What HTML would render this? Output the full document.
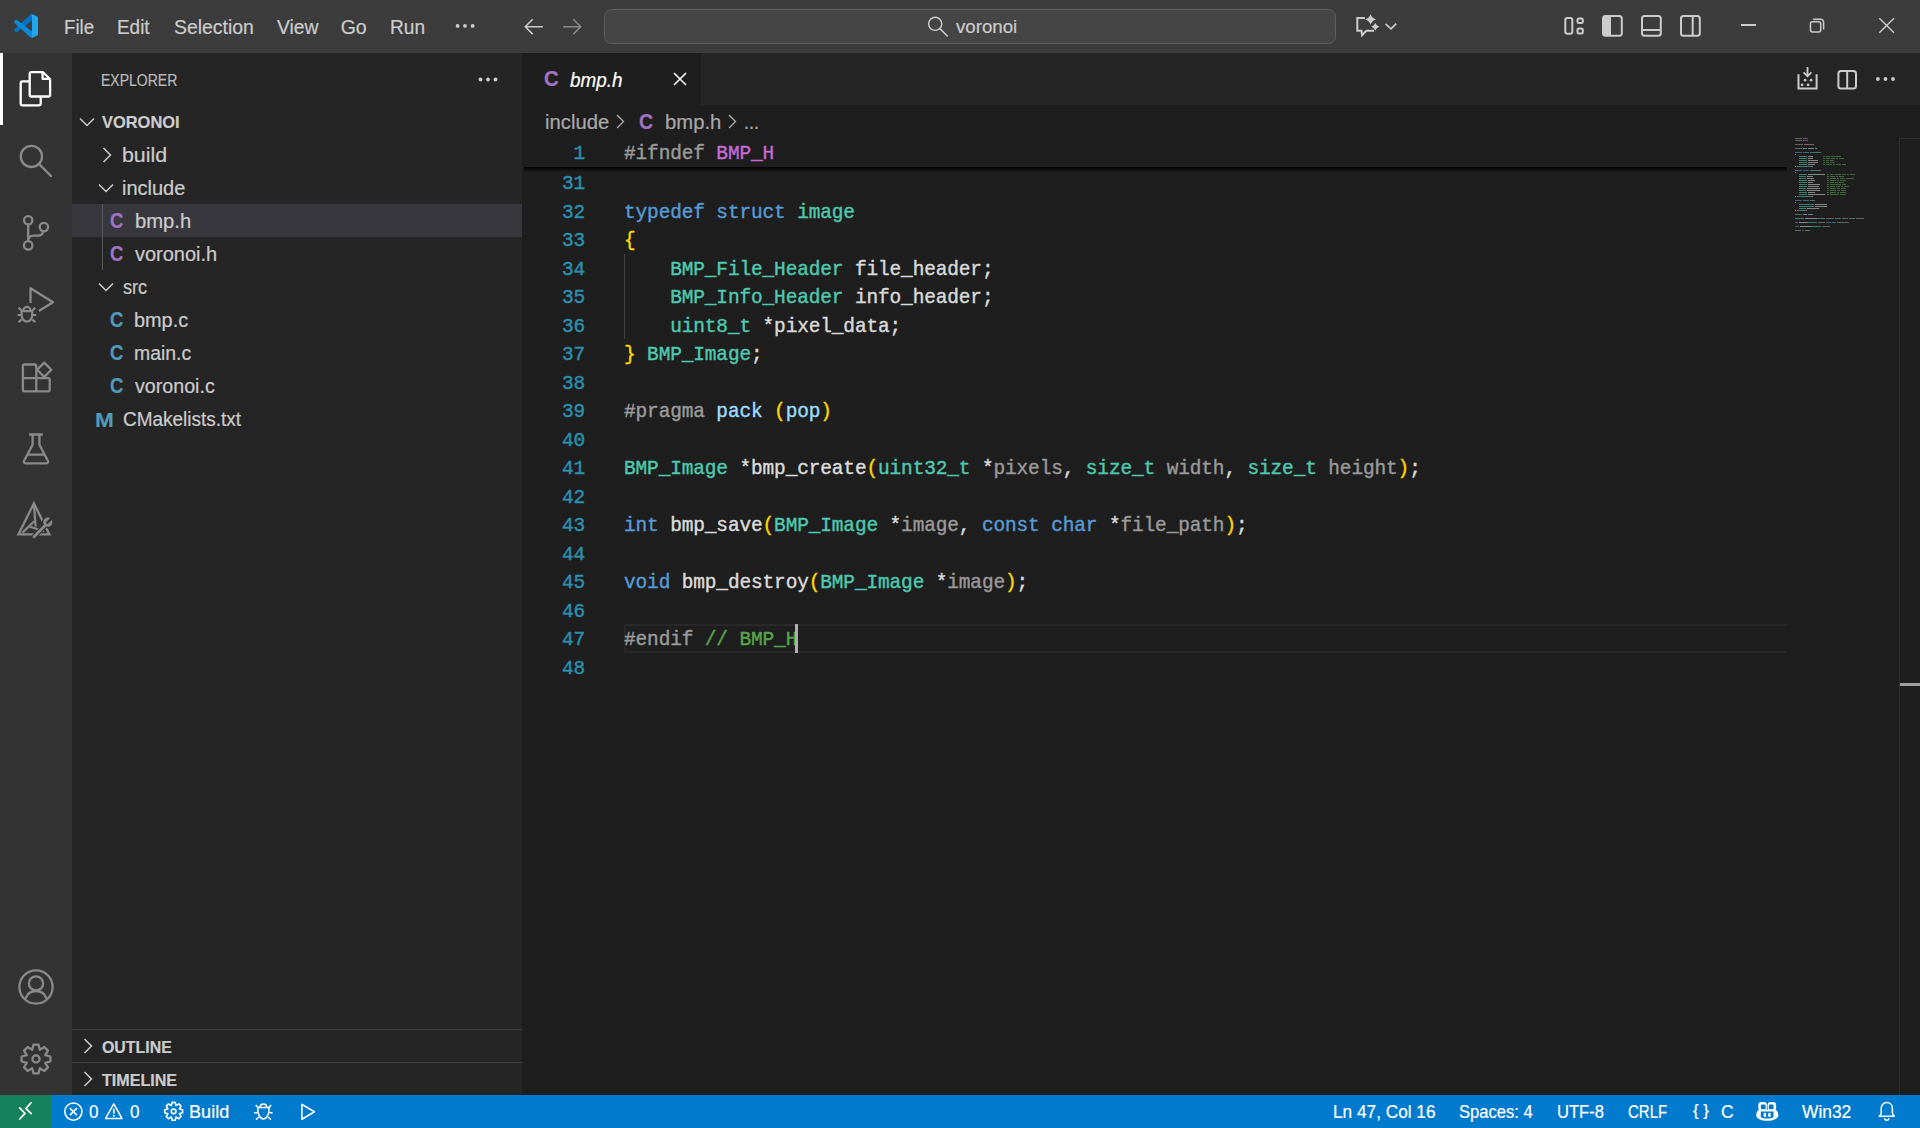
<!DOCTYPE html>
<html><head><meta charset="utf-8">
<style>
*{box-sizing:border-box;margin:0;padding:0}
html,body{width:1920px;height:1128px;overflow:hidden;background:#1e1e1e;font-family:"Liberation Sans",sans-serif;color:#cccccc}
.abs{position:absolute}
.t{position:absolute;white-space:pre}
.mono{font-family:"Liberation Mono",monospace;font-size:19.45px;letter-spacing:-0.12px;-webkit-text-stroke:0.4px currentColor}
.ln{position:absolute;left:522px;width:63px;text-align:right;color:#2b91af;height:28.5px;line-height:28.5px}
.cl{position:absolute;left:624px;height:28.5px;line-height:28.5px;color:#dadada;white-space:pre}
svg{position:absolute;overflow:visible}
</style></head><body>
<div class="abs" style="left:0px;top:0px;width:1920px;height:53px;background:#3c3c3c;"></div>
<div class="abs" style="left:0px;top:53px;width:72px;height:1042px;background:#333333;"></div>
<div class="abs" style="left:72px;top:53px;width:450px;height:1042px;background:#252526;"></div>
<div class="abs" style="left:522px;top:53px;width:1398px;height:52px;background:#252526;"></div>
<div class="abs" style="left:0px;top:1095px;width:1920px;height:33px;background:#007acc;"></div>
<svg style="left:14px;top:14px" width="24" height="24" viewBox="0 0 100 100">
<path d="M96.46 10.8 75.86.87C73.47-.28 70.62.2 68.75 2.08L1.32 63.6c-1.82 1.66-1.82 4.52 0 6.18l5.51 5.01c1.49 1.35 3.73 1.45 5.33.24L93.38 13.6c2.72-2.07 6.63-.13 6.63 3.29v-.24c0-2.4-1.38-4.59-3.54-5.63z" fill="#0072c6"/>
<path d="M96.46 89.2 75.86 99.13c-2.39 1.15-5.24.67-7.11-1.21L1.32 36.4c-1.82-1.66-1.82-4.52 0-6.18l5.51-5.01c1.49-1.35 3.73-1.45 5.33-.24l81.22 61.57c2.72 2.07 6.63.13 6.63-3.29v.24c0 2.4-1.38 4.59-3.54 5.63z" fill="#0a8ad8"/>
<path d="M75.86 99.13c-2.39 1.15-5.24.67-7.11-1.21 2.31 2.31 6.25.67 6.25-2.59V4.67c0-3.27-3.94-4.9-6.25-2.59 1.87-1.88 4.72-2.36 7.11-1.21l20.6 9.91c2.16 1.04 3.54 3.23 3.54 5.63v67.18c0 2.4-1.38 4.59-3.54 5.63z" fill="#24a6ee"/>
</svg>
<div class="t" style="left:64.04px;top:0px;height:54px;line-height:54px;font-size:19.5px;color:#cccccc;font-weight:400;font-style:normal;transform:scaleX(0.9567);transform-origin:0 0;-webkit-text-stroke:0.2px #cccccc;">File</div>
<div class="t" style="left:117.33px;top:0px;height:54px;line-height:54px;font-size:19.5px;color:#cccccc;font-weight:400;font-style:normal;transform:scaleX(0.9697);transform-origin:0 0;-webkit-text-stroke:0.2px #cccccc;">Edit</div>
<div class="t" style="left:173.71px;top:0px;height:54px;line-height:54px;font-size:19.5px;color:#cccccc;font-weight:400;font-style:normal;transform:scaleX(0.9949);transform-origin:0 0;-webkit-text-stroke:0.2px #cccccc;">Selection</div>
<div class="t" style="left:276.70px;top:0px;height:54px;line-height:54px;font-size:19.5px;color:#cccccc;font-weight:400;font-style:normal;transform:scaleX(0.9905);transform-origin:0 0;-webkit-text-stroke:0.2px #cccccc;">View</div>
<div class="t" style="left:340.70px;top:0px;height:54px;line-height:54px;font-size:19.5px;color:#cccccc;font-weight:400;font-style:normal;transform:scaleX(1.0000);transform-origin:0 0;-webkit-text-stroke:0.2px #cccccc;">Go</div>
<div class="t" style="left:390.02px;top:0px;height:54px;line-height:54px;font-size:19.5px;color:#cccccc;font-weight:400;font-style:normal;transform:scaleX(0.9794);transform-origin:0 0;-webkit-text-stroke:0.2px #cccccc;">Run</div>
<svg style="left:440px;top:0px" width="160" height="53" viewBox="440 0 160 53"><circle cx="457.6" cy="25.9" r="1.9" fill="#cccccc"/><circle cx="465" cy="25.9" r="1.9" fill="#cccccc"/><circle cx="472.6" cy="25.9" r="1.9" fill="#cccccc"/><path d="M542.9 26.7H525M532.7 19.3 525.3 26.7 532.7 34.1" stroke="#cccccc" stroke-width="1.5" fill="none"/><path d="M563.2 26.7H581M573.3 19.3 580.7 26.7 573.3 34.1" stroke="#8a8a8a" stroke-width="1.5" fill="none"/></svg>
<div class="abs" style="left:604px;top:9px;width:731.5px;height:35px;background:#454545;border:1px solid #5e5e5e;border-radius:7.5px"></div>
<svg style="left:916px;top:6px" width="40" height="40" viewBox="916 6 40 40"><circle cx="935.2" cy="23.8" r="6.6" stroke="#cccccc" stroke-width="1.4" fill="none"/><path d="M939.9 28.6 947.3 36" stroke="#cccccc" stroke-width="1.5" stroke-linecap="round"/></svg>
<div class="t" style="left:956.10px;top:10px;height:35px;line-height:35px;font-size:18px;color:#cccccc;font-weight:400;font-style:normal;transform:scaleX(1.0379);transform-origin:0 0;-webkit-text-stroke:0.2px #cccccc;">voronoi</div>
<svg style="left:1350px;top:6px" width="60" height="40" viewBox="0 0 60 40"><path d="M14.9 12.1H7.3V24.8H11.5L12.1 29.2 16.3 24.8H24.1" stroke="#cccccc" stroke-width="2" fill="none" stroke-linejoin="miter"/><path d="M20.6 8.0Q21.788 12.212 26.0 13.4Q21.788 14.588000000000001 20.6 18.8Q19.412000000000003 14.588000000000001 15.200000000000001 13.4Q19.412000000000003 12.212 20.6 8.0Z" fill="#cccccc"/><path d="M25.3 16.7Q26.18 19.82 29.3 20.7Q26.18 21.58 25.3 24.7Q24.42 21.58 21.3 20.7Q24.42 19.82 25.3 16.7Z" fill="#cccccc"/><path d="M35.6 17.9 41 22.9 46.3 17.7" stroke="#cccccc" stroke-width="1.7" fill="none"/></svg>
<svg style="left:1540px;top:0px" width="180" height="53" viewBox="1540 0 180 53"><rect x="1565.3" y="18" width="7" height="15.8" rx="2" stroke="#cccccc" stroke-width="2" fill="none"/><rect x="1577.5" y="18.4" width="5.3" height="4.6" rx="1.5" stroke="#cccccc" stroke-width="2" fill="none"/><rect x="1577.5" y="28.6" width="5.3" height="5" rx="1.5" stroke="#cccccc" stroke-width="2" fill="none"/><rect x="1603" y="16.1" width="18.8" height="19.6" rx="2.5" stroke="#cccccc" stroke-width="2" fill="none"/><path d="M1603 18.6a2.5 2.5 0 0 1 2.5-2.5H1611V35.7H1605.5a2.5 2.5 0 0 1-2.5-2.5z" fill="#cccccc"/><rect x="1642" y="16.1" width="18.8" height="19.6" rx="2.5" stroke="#cccccc" stroke-width="2" fill="none"/><path d="M1642 30H1660.8" stroke="#cccccc" stroke-width="2"/><rect x="1681" y="16.1" width="18.8" height="19.6" rx="2.5" stroke="#cccccc" stroke-width="2" fill="none"/><path d="M1692.7 16.1V35.7" stroke="#cccccc" stroke-width="2"/></svg>
<div class="abs" style="left:1741px;top:24px;width:15px;height:2px;background:#cccccc;"></div>
<svg style="left:1800px;top:10px" width="40" height="30" viewBox="1800 10 40 30"><rect x="1810.5" y="21.8" width="10.2" height="10.2" rx="2" stroke="#cccccc" stroke-width="1.5" fill="none"/><path d="M1813.2 19.2H1820.6a3 3 0 0 1 3 3V29.4" stroke="#cccccc" stroke-width="1.5" fill="none"/></svg>
<svg style="left:1870px;top:10px" width="30" height="30" viewBox="1870 10 30 30"><path d="M1879.3 18.2 1894 32.8M1894 18.2 1879.3 32.8" stroke="#cccccc" stroke-width="1.4"/></svg>
<div class="abs" style="left:0px;top:53px;width:3px;height:72px;background:#ffffff;"></div>
<svg style="left:12px;top:65px" width="48" height="48" viewBox="0 0 48 48"><path d="M17.7 16.4H10.5a1.8 1.8 0 0 0-1.8 1.8v20.4a1.8 1.8 0 0 0 1.8 1.8H26.9a1.8 1.8 0 0 0 1.8-1.8V31.5" stroke="#ffffff" stroke-width="2.3" fill="none" stroke-linejoin="round"/><path d="M19.5 7.2H31l7.1 7.1V29.7a1.8 1.8 0 0 1-1.8 1.8H19.5a1.8 1.8 0 0 1-1.8-1.8V9a1.8 1.8 0 0 1 1.8-1.8z" stroke="#ffffff" stroke-width="2.3" fill="none" stroke-linejoin="round"/><path d="M30.6 7.5V13.8H37.8" stroke="#ffffff" stroke-width="2.3" fill="none" stroke-linejoin="round"/></svg>
<svg style="left:12px;top:137px" width="48" height="48" viewBox="0 0 48 48"><circle cx="19.4" cy="19.4" r="10.6" stroke="#8a8a8a" stroke-width="2.3" fill="none" stroke-linejoin="round"/><path d="M27.2 27.2 39 39" stroke="#8a8a8a" stroke-width="2.4" stroke-linecap="round"/></svg>
<svg style="left:12px;top:206px" width="48" height="48" viewBox="0 0 48 48"><circle cx="16.2" cy="14.3" r="4.2" stroke="#8a8a8a" stroke-width="2.3" fill="none" stroke-linejoin="round"/><circle cx="31.9" cy="21.1" r="4.2" stroke="#8a8a8a" stroke-width="2.3" fill="none" stroke-linejoin="round"/><circle cx="16.2" cy="39.4" r="4.2" stroke="#8a8a8a" stroke-width="2.3" fill="none" stroke-linejoin="round"/><path d="M16.2 18.5V35.2M31.2 25.2c-.6 3-2.2 4.5-5 4.5H21.5c-3 0-5.3 1.6-5.3 5" stroke="#8a8a8a" stroke-width="2.3" fill="none" stroke-linejoin="round"/></svg>
<svg style="left:12px;top:278px" width="48" height="48" viewBox="0 0 48 48"><path d="M18.5 25V10.2L41 24.2 26.9 33" stroke="#8a8a8a" stroke-width="2.3" fill="none" stroke-linejoin="round"/><path d="M11.3 32.5a3.6 3.6 0 0 1 7.2 0" stroke="#8a8a8a" stroke-width="2.2" fill="none"/><path d="M9.6 33.2h10.6v4c0 3.6-2.3 6.5-5.3 6.5s-5.3-2.9-5.3-6.5z" stroke="#8a8a8a" stroke-width="2.2" fill="none"/><path d="M5.5 37h4M20.2 37h4M6.5 29.7l3 2.6M23.3 29.7l-3 2.6M6.5 44.2l3-2.6M23.3 44.2l-3-2.6" stroke="#8a8a8a" stroke-width="2.2"/></svg>
<svg style="left:12px;top:350px" width="48" height="48" viewBox="0 0 48 48"><path d="M24.3 41.3H12.4a1.5 1.5 0 0 1-1.5-1.5V16a1.5 1.5 0 0 1 1.5-1.5H22.8a1.5 1.5 0 0 1 1.5 1.5V41.3H36.2a1.5 1.5 0 0 0 1.5-1.5V29.6a1.5 1.5 0 0 0-1.5-1.5H10.9" stroke="#8a8a8a" stroke-width="2.3" fill="none" stroke-linejoin="round"/><path d="M32.2 12.6 39.3 19.8 32.2 26.9 25.1 19.8z" stroke="#8a8a8a" stroke-width="2.3" fill="none" stroke-linejoin="round"/></svg>
<svg style="left:12px;top:422px" width="48" height="48" viewBox="0 0 48 48"><path d="M17 12.5H30.9M20.6 12.5V22.8L12 39a1.5 1.5 0 0 0 1.3 2.3H34.6a1.5 1.5 0 0 0 1.3-2.3L27.4 22.8V12.5M16.2 32.6H31.8" stroke="#8a8a8a" stroke-width="2.3" fill="none" stroke-linejoin="round"/></svg>
<svg style="left:12px;top:494px" width="48" height="48" viewBox="0 0 48 48"><path d="M21.9 9.4 6.4 40.4H37.4z" stroke="#8a8a8a" stroke-width="2.3" fill="none" stroke-linejoin="miter"/><path d="M21.9 9.4 23.6 32.5M10.5 38.6 22.2 27.2M16.6 32.2 32 37.3" stroke="#8a8a8a" stroke-width="2.2" fill="none"/><path d="M34.3 30.2 22 42.8" stroke="#333333" stroke-width="5.2" stroke-linecap="round"/><circle cx="35.8" cy="28.2" r="6" fill="#333333"/><path d="M34.3 30.2 22 42.8" stroke="#8a8a8a" stroke-width="2.8" stroke-linecap="round"/><circle cx="35.8" cy="28.2" r="4.6" fill="#8a8a8a"/><path d="M35.4 28.6 40.8 23.2" stroke="#333333" stroke-width="2.6" stroke-linecap="round"/></svg>
<svg style="left:12px;top:963px" width="48" height="48" viewBox="0 0 48 48"><circle cx="24" cy="24" r="16.6" stroke="#8a8a8a" stroke-width="2.3" fill="none" stroke-linejoin="round"/><circle cx="24" cy="20.4" r="7.1" stroke="#8a8a8a" stroke-width="2.3" fill="none" stroke-linejoin="round"/><path d="M13.4 35.6c1.8-4.8 5.6-7.6 10.6-7.6s8.8 2.8 10.6 7.6" stroke="#8a8a8a" stroke-width="2.3" fill="none" stroke-linejoin="round"/></svg>
<svg style="left:12px;top:1035px" width="48" height="48" viewBox="0 0 48 48"><path d="M21.51 9.61 L26.49 9.61 L27.83 14.76 L32.41 12.07 L35.93 15.59 L33.24 20.17 L38.39 21.51 L38.39 26.49 L33.24 27.83 L35.93 32.41 L32.41 35.93 L27.83 33.24 L26.49 38.39 L21.51 38.39 L20.17 33.24 L15.59 35.93 L12.07 32.41 L14.76 27.83 L9.61 26.49 L9.61 21.51 L14.76 20.17 L12.07 15.59 L15.59 12.07 L20.17 14.76Z" stroke="#8a8a8a" stroke-width="2.3" fill="none" stroke-linejoin="round"/><circle cx="24" cy="24" r="3.6" stroke="#8a8a8a" stroke-width="2.3" fill="none"/></svg>
<div class="t" style="left:101.45px;top:64px;height:33px;line-height:33px;font-size:16.5px;color:#bbbbbb;font-weight:400;font-style:normal;transform:scaleX(0.8489);transform-origin:0 0;-webkit-text-stroke:0.2px #bbbbbb;">EXPLORER</div>
<svg style="left:477.5px;top:76.5px" width="20" height="5"><circle cx="2.5" cy="2.5" r="1.9" fill="#cccccc"/><circle cx="10" cy="2.5" r="1.9" fill="#cccccc"/><circle cx="17.5" cy="2.5" r="1.9" fill="#cccccc"/></svg>
<svg style="left:79px;top:117px" width="16" height="10" viewBox="0 0 16 10"><path d="M1 1.5l7 7 7-7" stroke="#cccccc" stroke-width="1.5" fill="none"/></svg>
<div class="t" style="left:102.30px;top:106px;height:33px;line-height:33px;font-size:16.5px;color:#cccccc;font-weight:700;font-style:normal;transform:scaleX(0.9961);transform-origin:0 0;-webkit-text-stroke:0.2px #cccccc;">VORONOI</div>
<div class="abs" style="left:72px;top:204px;width:450px;height:33px;background:#37373d;"></div>
<div class="abs" style="left:102px;top:204px;width:1px;height:66px;background:#585858;"></div>
<svg style="left:102px;top:147px" width="10" height="16" viewBox="0 0 10 16"><path d="M1.5 1l7 7-7 7" stroke="#cccccc" stroke-width="1.5" fill="none"/></svg>
<div class="t" style="left:122.31px;top:139px;height:33px;line-height:33px;font-size:19.5px;color:#cccccc;font-weight:400;font-style:normal;transform:scaleX(1.0949);transform-origin:0 0;-webkit-text-stroke:0.2px #cccccc;">build</div>
<svg style="left:98px;top:183px" width="16" height="10" viewBox="0 0 16 10"><path d="M1 1.5l7 7 7-7" stroke="#cccccc" stroke-width="1.5" fill="none"/></svg>
<div class="t" style="left:122.38px;top:172px;height:33px;line-height:33px;font-size:19.5px;color:#cccccc;font-weight:400;font-style:normal;transform:scaleX(1.0250);transform-origin:0 0;-webkit-text-stroke:0.2px #cccccc;">include</div>
<div class="t" style="left:109.64px;top:205px;height:33px;line-height:33px;font-size:21.5px;color:#a074c4;font-weight:700;font-style:normal;transform:scaleX(0.8571);transform-origin:0 0;-webkit-text-stroke:0.2px #a074c4;">C</div>
<div class="t" style="left:134.76px;top:205px;height:33px;line-height:33px;font-size:19.5px;color:#cccccc;font-weight:400;font-style:normal;transform:scaleX(1.0365);transform-origin:0 0;-webkit-text-stroke:0.2px #cccccc;">bmp.h</div>
<div class="t" style="left:109.64px;top:238px;height:33px;line-height:33px;font-size:21.5px;color:#a074c4;font-weight:700;font-style:normal;transform:scaleX(0.8571);transform-origin:0 0;-webkit-text-stroke:0.2px #a074c4;">C</div>
<div class="t" style="left:135.30px;top:238px;height:33px;line-height:33px;font-size:19.5px;color:#cccccc;font-weight:400;font-style:normal;transform:scaleX(1.0241);transform-origin:0 0;-webkit-text-stroke:0.2px #cccccc;">voronoi.h</div>
<svg style="left:98px;top:282px" width="16" height="10" viewBox="0 0 16 10"><path d="M1 1.5l7 7 7-7" stroke="#cccccc" stroke-width="1.5" fill="none"/></svg>
<div class="t" style="left:123.20px;top:271px;height:33px;line-height:33px;font-size:19.5px;color:#cccccc;font-weight:400;font-style:normal;transform:scaleX(0.9308);transform-origin:0 0;-webkit-text-stroke:0.2px #cccccc;">src</div>
<div class="t" style="left:109.64px;top:304px;height:33px;line-height:33px;font-size:21.5px;color:#519aba;font-weight:700;font-style:normal;transform:scaleX(0.8571);transform-origin:0 0;-webkit-text-stroke:0.2px #519aba;">C</div>
<div class="t" style="left:134.28px;top:304px;height:33px;line-height:33px;font-size:19.5px;color:#cccccc;font-weight:400;font-style:normal;transform:scaleX(1.0192);transform-origin:0 0;-webkit-text-stroke:0.2px #cccccc;">bmp.c</div>
<div class="t" style="left:109.64px;top:337px;height:33px;line-height:33px;font-size:21.5px;color:#519aba;font-weight:700;font-style:normal;transform:scaleX(0.8571);transform-origin:0 0;-webkit-text-stroke:0.2px #519aba;">C</div>
<div class="t" style="left:134.30px;top:337px;height:33px;line-height:33px;font-size:19.5px;color:#cccccc;font-weight:400;font-style:normal;transform:scaleX(0.9964);transform-origin:0 0;-webkit-text-stroke:0.2px #cccccc;">main.c</div>
<div class="t" style="left:109.64px;top:370px;height:33px;line-height:33px;font-size:21.5px;color:#519aba;font-weight:700;font-style:normal;transform:scaleX(0.8571);transform-origin:0 0;-webkit-text-stroke:0.2px #519aba;">C</div>
<div class="t" style="left:135.30px;top:370px;height:33px;line-height:33px;font-size:19.5px;color:#cccccc;font-weight:400;font-style:normal;transform:scaleX(1.0076);transform-origin:0 0;-webkit-text-stroke:0.2px #cccccc;">voronoi.c</div>
<div class="t" style="left:95.22px;top:403px;height:33px;line-height:33px;font-size:21px;color:#519aba;font-weight:700;font-style:normal;transform:scaleX(1.0750);transform-origin:0 0;-webkit-text-stroke:0.2px #519aba;">M</div>
<div class="t" style="left:122.73px;top:403px;height:33px;line-height:33px;font-size:19.5px;color:#cccccc;font-weight:400;font-style:normal;transform:scaleX(0.9727);transform-origin:0 0;-webkit-text-stroke:0.2px #cccccc;">CMakelists.txt</div>
<div class="abs" style="left:72px;top:1029px;width:450px;height:1px;background:#3f3f40;"></div>
<div class="abs" style="left:72px;top:1062px;width:450px;height:1px;background:#3f3f40;"></div>
<svg style="left:83px;top:1038px" width="10" height="16" viewBox="0 0 10 16"><path d="M1.5 1l7 7-7 7" stroke="#cccccc" stroke-width="1.5" fill="none"/></svg>
<svg style="left:83px;top:1071px" width="10" height="16" viewBox="0 0 10 16"><path d="M1.5 1l7 7-7 7" stroke="#cccccc" stroke-width="1.5" fill="none"/></svg>
<div class="t" style="left:102.10px;top:1031px;height:33px;line-height:33px;font-size:16.5px;color:#cccccc;font-weight:700;font-style:normal;transform:scaleX(0.9639);transform-origin:0 0;-webkit-text-stroke:0.2px #cccccc;">OUTLINE</div>
<div class="t" style="left:102.10px;top:1064px;height:33px;line-height:33px;font-size:16.5px;color:#cccccc;font-weight:700;font-style:normal;transform:scaleX(0.9753);transform-origin:0 0;-webkit-text-stroke:0.2px #cccccc;">TIMELINE</div>
<div class="abs" style="left:522px;top:53px;width:179px;height:52px;background:#1e1e1e;"></div>
<div class="t" style="left:544.05px;top:53px;height:52px;line-height:52px;font-size:21.5px;color:#a074c4;font-weight:700;font-style:normal;transform:scaleX(0.9500);transform-origin:0 0;-webkit-text-stroke:0.2px #a074c4;">C</div>
<div class="t" style="left:570.00px;top:54px;height:52px;line-height:52px;font-size:19.5px;color:#ffffff;font-weight:400;font-style:italic;transform:scaleX(0.9685);transform-origin:0 0;-webkit-text-stroke:0.2px #ffffff;">bmp.h</div>
<svg style="left:673px;top:72px" width="14" height="14" viewBox="0 0 14 14"><path d="M1 1l12 12M13 1 1 13" stroke="#ffffff" stroke-width="1.6"/></svg>
<svg style="left:1790px;top:60px" width="116" height="40" viewBox="1790 60 116 40"><path d="M1798.5 74.2V88.4H1816.6V74.2" stroke="#cccccc" stroke-width="2" fill="none"/><path d="M1807.5 67V76M1803.6 72.4 1807.5 76.3 1811.4 72.4" stroke="#cccccc" stroke-width="1.8" fill="none"/><circle cx="1805.1" cy="80.2" r="1.35" fill="#cccccc"/><circle cx="1811.1" cy="80.2" r="1.35" fill="#cccccc"/><circle cx="1802.1" cy="84.8" r="1.35" fill="#cccccc"/><circle cx="1808.1" cy="84.8" r="1.35" fill="#cccccc"/><rect x="1838.4" y="71" width="17.6" height="17.6" rx="2.5" stroke="#cccccc" stroke-width="2" fill="none"/><path d="M1847.2 71V88.6" stroke="#cccccc" stroke-width="2"/><circle cx="1877.9" cy="79" r="1.9" fill="#cccccc"/><circle cx="1885.5" cy="79" r="1.9" fill="#cccccc"/><circle cx="1893" cy="79" r="1.9" fill="#cccccc"/></svg>
<div class="t" style="left:544.96px;top:106px;height:33px;line-height:33px;font-size:19.5px;color:#a9a9a9;font-weight:400;font-style:normal;transform:scaleX(1.0383);transform-origin:0 0;-webkit-text-stroke:0.2px #a9a9a9;">include</div>
<svg style="left:616px;top:114px" width="9" height="15" viewBox="0 0 9 15"><path d="M1 1l6.5 6.5L1 14" stroke="#a9a9a9" stroke-width="1.4" fill="none"/></svg>
<div class="t" style="left:639.39px;top:106px;height:33px;line-height:33px;font-size:21.5px;color:#a074c4;font-weight:700;font-style:normal;transform:scaleX(0.9071);transform-origin:0 0;-webkit-text-stroke:0.2px #a074c4;">C</div>
<div class="t" style="left:664.96px;top:106px;height:33px;line-height:33px;font-size:19.5px;color:#a9a9a9;font-weight:400;font-style:normal;transform:scaleX(1.0385);transform-origin:0 0;-webkit-text-stroke:0.2px #a9a9a9;">bmp.h</div>
<svg style="left:728px;top:114px" width="9" height="15" viewBox="0 0 9 15"><path d="M1 1l6.5 6.5L1 14" stroke="#a9a9a9" stroke-width="1.4" fill="none"/></svg>
<div class="t" style="left:744.07px;top:106px;height:33px;line-height:33px;font-size:19.5px;color:#a9a9a9;font-weight:400;font-style:normal;transform:scaleX(0.9286);transform-origin:0 0;-webkit-text-stroke:0.2px #a9a9a9;">...</div>
<div class="abs" style="left:624px;top:624.0px;width:1163px;height:28.5px;background:transparent;border:2px solid #282828;border-right:none"></div>
<div class="ln mono" style="top:170.0px">31</div>
<div class="ln mono" style="top:198.5px">32</div>
<div class="cl mono" style="top:198.5px"><span style="color:#569cd6">typedef</span> <span style="color:#569cd6">struct</span> <span style="color:#4ec9b0">image</span></div>
<div class="ln mono" style="top:227.0px">33</div>
<div class="cl mono" style="top:227.0px"><span style="color:#ffd700">{</span></div>
<div class="ln mono" style="top:255.5px">34</div>
<div class="cl mono" style="top:255.5px">    <span style="color:#4ec9b0">BMP_File_Header</span> file_header;</div>
<div class="ln mono" style="top:284.0px">35</div>
<div class="cl mono" style="top:284.0px">    <span style="color:#4ec9b0">BMP_Info_Header</span> info_header;</div>
<div class="ln mono" style="top:312.5px">36</div>
<div class="cl mono" style="top:312.5px">    <span style="color:#4ec9b0">uint8_t</span> *pixel_data;</div>
<div class="ln mono" style="top:341.0px">37</div>
<div class="cl mono" style="top:341.0px"><span style="color:#ffd700">}</span> <span style="color:#4ec9b0">BMP_Image</span>;</div>
<div class="ln mono" style="top:369.5px">38</div>
<div class="ln mono" style="top:398.0px">39</div>
<div class="cl mono" style="top:398.0px"><span style="color:#9b9b9b">#pragma</span> <span style="color:#9cdcfe">pack</span> <span style="color:#ffd700">(</span><span style="color:#9cdcfe">pop</span><span style="color:#ffd700">)</span></div>
<div class="ln mono" style="top:426.5px">40</div>
<div class="ln mono" style="top:455.0px">41</div>
<div class="cl mono" style="top:455.0px"><span style="color:#4ec9b0">BMP_Image</span> *<span style="color:#dcdcdc">bmp_create</span><span style="color:#ffd700">(</span><span style="color:#4ec9b0">uint32_t</span> *<span style="color:#9a9a9a">pixels</span>, <span style="color:#4ec9b0">size_t</span> <span style="color:#9a9a9a">width</span>, <span style="color:#4ec9b0">size_t</span> <span style="color:#9a9a9a">height</span><span style="color:#ffd700">)</span>;</div>
<div class="ln mono" style="top:483.5px">42</div>
<div class="ln mono" style="top:512.0px">43</div>
<div class="cl mono" style="top:512.0px"><span style="color:#569cd6">int</span> <span style="color:#dcdcdc">bmp_save</span><span style="color:#ffd700">(</span><span style="color:#4ec9b0">BMP_Image</span> *<span style="color:#9a9a9a">image</span>, <span style="color:#569cd6">const</span> <span style="color:#569cd6">char</span> *<span style="color:#9a9a9a">file_path</span><span style="color:#ffd700">)</span>;</div>
<div class="ln mono" style="top:540.5px">44</div>
<div class="ln mono" style="top:569.0px">45</div>
<div class="cl mono" style="top:569.0px"><span style="color:#569cd6">void</span> <span style="color:#dcdcdc">bmp_destroy</span><span style="color:#ffd700">(</span><span style="color:#4ec9b0">BMP_Image</span> *<span style="color:#9a9a9a">image</span><span style="color:#ffd700">)</span>;</div>
<div class="ln mono" style="top:597.5px">46</div>
<div class="ln mono" style="top:626.0px">47</div>
<div class="cl mono" style="top:626.0px"><span style="color:#9b9b9b">#endif</span> <span style="color:#57a64a">// BMP_H</span></div>
<div class="ln mono" style="top:654.5px">48</div>
<div class="abs" style="left:624px;top:253.5px;width:1px;height:85.5px;background:#404040;"></div>
<div class="abs" style="left:795px;top:624.0px;width:3px;height:28.5px;background:#aeafad;"></div>
<div class="abs" style="left:522px;top:138px;width:1265px;height:28.5px;background:#1e1e1e;"></div>
<div class="abs" style="left:524px;top:166.5px;width:1263px;height:5px;background:linear-gradient(#000000 0%, rgba(0,0,0,0) 100%);"></div>
<div class="ln mono" style="top:140px">1</div>
<div class="cl mono" style="top:140px"><span style="color:#9b9b9b">#ifndef</span> <span style="color:#c66bd2">BMP_H</span></div>
<div style="position:absolute;left:0;top:0;width:0;height:0"><div style="position:absolute;left:1795.0px;top:138px;width:7px;height:2px;background:linear-gradient(#9b9b9b 72%,transparent 72%);opacity:.55"></div><div style="position:absolute;left:1803.0px;top:138px;width:5px;height:2px;background:linear-gradient(#c868d2 72%,transparent 72%);opacity:.55"></div><div style="position:absolute;left:1795.0px;top:140px;width:7px;height:2px;background:linear-gradient(#9b9b9b 72%,transparent 72%);opacity:.55"></div><div style="position:absolute;left:1803.0px;top:140px;width:5px;height:2px;background:linear-gradient(#c868d2 72%,transparent 72%);opacity:.55"></div><div style="position:absolute;left:1795.0px;top:144px;width:8px;height:2px;background:linear-gradient(#9b9b9b 72%,transparent 72%);opacity:.55"></div><div style="position:absolute;left:1804.0px;top:144px;width:10px;height:2px;background:linear-gradient(#d69d85 72%,transparent 72%);opacity:.55"></div><div style="position:absolute;left:1795.0px;top:148px;width:7px;height:2px;background:linear-gradient(#9b9b9b 72%,transparent 72%);opacity:.55"></div><div style="position:absolute;left:1803.0px;top:148px;width:4px;height:2px;background:linear-gradient(#9cdcfe 72%,transparent 72%);opacity:.55"></div><div style="position:absolute;left:1808.0px;top:148px;width:6px;height:2px;background:linear-gradient(#9cdcfe 72%,transparent 72%);opacity:.55"></div><div style="position:absolute;left:1815.0px;top:148px;width:2px;height:2px;background:linear-gradient(#b5cea8 72%,transparent 72%);opacity:.55"></div><div style="position:absolute;left:1795.0px;top:152px;width:7px;height:2px;background:linear-gradient(#569cd6 72%,transparent 72%);opacity:.55"></div><div style="position:absolute;left:1803.0px;top:152px;width:6px;height:2px;background:linear-gradient(#569cd6 72%,transparent 72%);opacity:.55"></div><div style="position:absolute;left:1810.0px;top:152px;width:11px;height:2px;background:linear-gradient(#4ec9b0 72%,transparent 72%);opacity:.55"></div><div style="position:absolute;left:1795.0px;top:154px;width:1px;height:2px;background:linear-gradient(#cccccc 72%,transparent 72%);opacity:.55"></div><div style="position:absolute;left:1799.0px;top:156px;width:8px;height:2px;background:linear-gradient(#4ec9b0 72%,transparent 72%);opacity:.55"></div><div style="position:absolute;left:1808.0px;top:156px;width:5px;height:2px;background:linear-gradient(#dcdcdc 72%,transparent 72%);opacity:.55"></div><div style="position:absolute;left:1823.0px;top:156px;width:2px;height:2px;background:linear-gradient(#57a64a 72%,transparent 72%);opacity:.55"></div><div style="position:absolute;left:1826.0px;top:156px;width:4px;height:2px;background:linear-gradient(#57a64a 72%,transparent 72%);opacity:.55"></div><div style="position:absolute;left:1831.0px;top:156px;width:10px;height:2px;background:linear-gradient(#57a64a 72%,transparent 72%);opacity:.55"></div><div style="position:absolute;left:1799.0px;top:158px;width:8px;height:2px;background:linear-gradient(#4ec9b0 72%,transparent 72%);opacity:.55"></div><div style="position:absolute;left:1808.0px;top:158px;width:5px;height:2px;background:linear-gradient(#dcdcdc 72%,transparent 72%);opacity:.55"></div><div style="position:absolute;left:1823.0px;top:158px;width:2px;height:2px;background:linear-gradient(#57a64a 72%,transparent 72%);opacity:.55"></div><div style="position:absolute;left:1826.0px;top:158px;width:4px;height:2px;background:linear-gradient(#57a64a 72%,transparent 72%);opacity:.55"></div><div style="position:absolute;left:1831.0px;top:158px;width:4px;height:2px;background:linear-gradient(#57a64a 72%,transparent 72%);opacity:.55"></div><div style="position:absolute;left:1836.0px;top:158px;width:2px;height:2px;background:linear-gradient(#57a64a 72%,transparent 72%);opacity:.55"></div><div style="position:absolute;left:1839.0px;top:158px;width:5px;height:2px;background:linear-gradient(#57a64a 72%,transparent 72%);opacity:.55"></div><div style="position:absolute;left:1799.0px;top:160px;width:8px;height:2px;background:linear-gradient(#4ec9b0 72%,transparent 72%);opacity:.55"></div><div style="position:absolute;left:1808.0px;top:160px;width:10px;height:2px;background:linear-gradient(#dcdcdc 72%,transparent 72%);opacity:.55"></div><div style="position:absolute;left:1823.0px;top:160px;width:2px;height:2px;background:linear-gradient(#57a64a 72%,transparent 72%);opacity:.55"></div><div style="position:absolute;left:1826.0px;top:160px;width:3px;height:2px;background:linear-gradient(#57a64a 72%,transparent 72%);opacity:.55"></div><div style="position:absolute;left:1830.0px;top:160px;width:4px;height:2px;background:linear-gradient(#57a64a 72%,transparent 72%);opacity:.55"></div><div style="position:absolute;left:1799.0px;top:162px;width:8px;height:2px;background:linear-gradient(#4ec9b0 72%,transparent 72%);opacity:.55"></div><div style="position:absolute;left:1808.0px;top:162px;width:10px;height:2px;background:linear-gradient(#dcdcdc 72%,transparent 72%);opacity:.55"></div><div style="position:absolute;left:1823.0px;top:162px;width:2px;height:2px;background:linear-gradient(#57a64a 72%,transparent 72%);opacity:.55"></div><div style="position:absolute;left:1826.0px;top:162px;width:3px;height:2px;background:linear-gradient(#57a64a 72%,transparent 72%);opacity:.55"></div><div style="position:absolute;left:1830.0px;top:162px;width:4px;height:2px;background:linear-gradient(#57a64a 72%,transparent 72%);opacity:.55"></div><div style="position:absolute;left:1799.0px;top:164px;width:8px;height:2px;background:linear-gradient(#4ec9b0 72%,transparent 72%);opacity:.55"></div><div style="position:absolute;left:1808.0px;top:164px;width:7px;height:2px;background:linear-gradient(#dcdcdc 72%,transparent 72%);opacity:.55"></div><div style="position:absolute;left:1823.0px;top:164px;width:2px;height:2px;background:linear-gradient(#57a64a 72%,transparent 72%);opacity:.55"></div><div style="position:absolute;left:1826.0px;top:164px;width:6px;height:2px;background:linear-gradient(#57a64a 72%,transparent 72%);opacity:.55"></div><div style="position:absolute;left:1833.0px;top:164px;width:2px;height:2px;background:linear-gradient(#57a64a 72%,transparent 72%);opacity:.55"></div><div style="position:absolute;left:1836.0px;top:164px;width:5px;height:2px;background:linear-gradient(#57a64a 72%,transparent 72%);opacity:.55"></div><div style="position:absolute;left:1842.0px;top:164px;width:4px;height:2px;background:linear-gradient(#57a64a 72%,transparent 72%);opacity:.55"></div><div style="position:absolute;left:1795.0px;top:166px;width:1px;height:2px;background:linear-gradient(#cccccc 72%,transparent 72%);opacity:.55"></div><div style="position:absolute;left:1797.0px;top:166px;width:15px;height:2px;background:linear-gradient(#4ec9b0 72%,transparent 72%);opacity:.55"></div><div style="position:absolute;left:1812.0px;top:166px;width:1px;height:2px;background:linear-gradient(#dcdcdc 72%,transparent 72%);opacity:.55"></div><div style="position:absolute;left:1795.0px;top:170px;width:7px;height:2px;background:linear-gradient(#569cd6 72%,transparent 72%);opacity:.55"></div><div style="position:absolute;left:1803.0px;top:170px;width:6px;height:2px;background:linear-gradient(#569cd6 72%,transparent 72%);opacity:.55"></div><div style="position:absolute;left:1810.0px;top:170px;width:11px;height:2px;background:linear-gradient(#4ec9b0 72%,transparent 72%);opacity:.55"></div><div style="position:absolute;left:1795.0px;top:172px;width:1px;height:2px;background:linear-gradient(#cccccc 72%,transparent 72%);opacity:.55"></div><div style="position:absolute;left:1799.0px;top:174px;width:8px;height:2px;background:linear-gradient(#4ec9b0 72%,transparent 72%);opacity:.55"></div><div style="position:absolute;left:1808.0px;top:174px;width:17px;height:2px;background:linear-gradient(#dcdcdc 72%,transparent 72%);opacity:.55"></div><div style="position:absolute;left:1827.0px;top:174px;width:2px;height:2px;background:linear-gradient(#57a64a 72%,transparent 72%);opacity:.55"></div><div style="position:absolute;left:1830.0px;top:174px;width:4px;height:2px;background:linear-gradient(#57a64a 72%,transparent 72%);opacity:.55"></div><div style="position:absolute;left:1835.0px;top:174px;width:6px;height:2px;background:linear-gradient(#57a64a 72%,transparent 72%);opacity:.55"></div><div style="position:absolute;left:1842.0px;top:174px;width:4px;height:2px;background:linear-gradient(#57a64a 72%,transparent 72%);opacity:.55"></div><div style="position:absolute;left:1847.0px;top:174px;width:2px;height:2px;background:linear-gradient(#57a64a 72%,transparent 72%);opacity:.55"></div><div style="position:absolute;left:1850.0px;top:174px;width:5px;height:2px;background:linear-gradient(#57a64a 72%,transparent 72%);opacity:.55"></div><div style="position:absolute;left:1799.0px;top:176px;width:7px;height:2px;background:linear-gradient(#4ec9b0 72%,transparent 72%);opacity:.55"></div><div style="position:absolute;left:1807.0px;top:176px;width:6px;height:2px;background:linear-gradient(#dcdcdc 72%,transparent 72%);opacity:.55"></div><div style="position:absolute;left:1827.0px;top:176px;width:2px;height:2px;background:linear-gradient(#57a64a 72%,transparent 72%);opacity:.55"></div><div style="position:absolute;left:1830.0px;top:176px;width:5px;height:2px;background:linear-gradient(#57a64a 72%,transparent 72%);opacity:.55"></div><div style="position:absolute;left:1836.0px;top:176px;width:2px;height:2px;background:linear-gradient(#57a64a 72%,transparent 72%);opacity:.55"></div><div style="position:absolute;left:1839.0px;top:176px;width:5px;height:2px;background:linear-gradient(#57a64a 72%,transparent 72%);opacity:.55"></div><div style="position:absolute;left:1799.0px;top:178px;width:7px;height:2px;background:linear-gradient(#4ec9b0 72%,transparent 72%);opacity:.55"></div><div style="position:absolute;left:1807.0px;top:178px;width:7px;height:2px;background:linear-gradient(#dcdcdc 72%,transparent 72%);opacity:.55"></div><div style="position:absolute;left:1827.0px;top:178px;width:2px;height:2px;background:linear-gradient(#57a64a 72%,transparent 72%);opacity:.55"></div><div style="position:absolute;left:1830.0px;top:178px;width:6px;height:2px;background:linear-gradient(#57a64a 72%,transparent 72%);opacity:.55"></div><div style="position:absolute;left:1837.0px;top:178px;width:2px;height:2px;background:linear-gradient(#57a64a 72%,transparent 72%);opacity:.55"></div><div style="position:absolute;left:1840.0px;top:178px;width:5px;height:2px;background:linear-gradient(#57a64a 72%,transparent 72%);opacity:.55"></div><div style="position:absolute;left:1846.0px;top:178px;width:8px;height:2px;background:linear-gradient(#57a64a 72%,transparent 72%);opacity:.55"></div><div style="position:absolute;left:1799.0px;top:180px;width:8px;height:2px;background:linear-gradient(#4ec9b0 72%,transparent 72%);opacity:.55"></div><div style="position:absolute;left:1808.0px;top:180px;width:7px;height:2px;background:linear-gradient(#dcdcdc 72%,transparent 72%);opacity:.55"></div><div style="position:absolute;left:1827.0px;top:180px;width:2px;height:2px;background:linear-gradient(#57a64a 72%,transparent 72%);opacity:.55"></div><div style="position:absolute;left:1830.0px;top:180px;width:6px;height:2px;background:linear-gradient(#57a64a 72%,transparent 72%);opacity:.55"></div><div style="position:absolute;left:1837.0px;top:180px;width:2px;height:2px;background:linear-gradient(#57a64a 72%,transparent 72%);opacity:.55"></div><div style="position:absolute;left:1840.0px;top:180px;width:6px;height:2px;background:linear-gradient(#57a64a 72%,transparent 72%);opacity:.55"></div><div style="position:absolute;left:1799.0px;top:182px;width:8px;height:2px;background:linear-gradient(#4ec9b0 72%,transparent 72%);opacity:.55"></div><div style="position:absolute;left:1808.0px;top:182px;width:5px;height:2px;background:linear-gradient(#dcdcdc 72%,transparent 72%);opacity:.55"></div><div style="position:absolute;left:1827.0px;top:182px;width:2px;height:2px;background:linear-gradient(#57a64a 72%,transparent 72%);opacity:.55"></div><div style="position:absolute;left:1830.0px;top:182px;width:4px;height:2px;background:linear-gradient(#57a64a 72%,transparent 72%);opacity:.55"></div><div style="position:absolute;left:1835.0px;top:182px;width:3px;height:2px;background:linear-gradient(#57a64a 72%,transparent 72%);opacity:.55"></div><div style="position:absolute;left:1839.0px;top:182px;width:5px;height:2px;background:linear-gradient(#57a64a 72%,transparent 72%);opacity:.55"></div><div style="position:absolute;left:1799.0px;top:184px;width:8px;height:2px;background:linear-gradient(#4ec9b0 72%,transparent 72%);opacity:.55"></div><div style="position:absolute;left:1808.0px;top:184px;width:12px;height:2px;background:linear-gradient(#dcdcdc 72%,transparent 72%);opacity:.55"></div><div style="position:absolute;left:1827.0px;top:184px;width:2px;height:2px;background:linear-gradient(#57a64a 72%,transparent 72%);opacity:.55"></div><div style="position:absolute;left:1830.0px;top:184px;width:11px;height:2px;background:linear-gradient(#57a64a 72%,transparent 72%);opacity:.55"></div><div style="position:absolute;left:1842.0px;top:184px;width:4px;height:2px;background:linear-gradient(#57a64a 72%,transparent 72%);opacity:.55"></div><div style="position:absolute;left:1799.0px;top:186px;width:8px;height:2px;background:linear-gradient(#4ec9b0 72%,transparent 72%);opacity:.55"></div><div style="position:absolute;left:1808.0px;top:186px;width:11px;height:2px;background:linear-gradient(#dcdcdc 72%,transparent 72%);opacity:.55"></div><div style="position:absolute;left:1827.0px;top:186px;width:2px;height:2px;background:linear-gradient(#57a64a 72%,transparent 72%);opacity:.55"></div><div style="position:absolute;left:1830.0px;top:186px;width:5px;height:2px;background:linear-gradient(#57a64a 72%,transparent 72%);opacity:.55"></div><div style="position:absolute;left:1836.0px;top:186px;width:4px;height:2px;background:linear-gradient(#57a64a 72%,transparent 72%);opacity:.55"></div><div style="position:absolute;left:1841.0px;top:186px;width:2px;height:2px;background:linear-gradient(#57a64a 72%,transparent 72%);opacity:.55"></div><div style="position:absolute;left:1844.0px;top:186px;width:5px;height:2px;background:linear-gradient(#57a64a 72%,transparent 72%);opacity:.55"></div><div style="position:absolute;left:1799.0px;top:188px;width:7px;height:2px;background:linear-gradient(#4ec9b0 72%,transparent 72%);opacity:.55"></div><div style="position:absolute;left:1807.0px;top:188px;width:13px;height:2px;background:linear-gradient(#dcdcdc 72%,transparent 72%);opacity:.55"></div><div style="position:absolute;left:1827.0px;top:188px;width:2px;height:2px;background:linear-gradient(#57a64a 72%,transparent 72%);opacity:.55"></div><div style="position:absolute;left:1830.0px;top:188px;width:6px;height:2px;background:linear-gradient(#57a64a 72%,transparent 72%);opacity:.55"></div><div style="position:absolute;left:1837.0px;top:188px;width:3px;height:2px;background:linear-gradient(#57a64a 72%,transparent 72%);opacity:.55"></div><div style="position:absolute;left:1841.0px;top:188px;width:5px;height:2px;background:linear-gradient(#57a64a 72%,transparent 72%);opacity:.55"></div><div style="position:absolute;left:1799.0px;top:190px;width:7px;height:2px;background:linear-gradient(#4ec9b0 72%,transparent 72%);opacity:.55"></div><div style="position:absolute;left:1807.0px;top:190px;width:13px;height:2px;background:linear-gradient(#dcdcdc 72%,transparent 72%);opacity:.55"></div><div style="position:absolute;left:1827.0px;top:190px;width:2px;height:2px;background:linear-gradient(#57a64a 72%,transparent 72%);opacity:.55"></div><div style="position:absolute;left:1830.0px;top:190px;width:6px;height:2px;background:linear-gradient(#57a64a 72%,transparent 72%);opacity:.55"></div><div style="position:absolute;left:1837.0px;top:190px;width:3px;height:2px;background:linear-gradient(#57a64a 72%,transparent 72%);opacity:.55"></div><div style="position:absolute;left:1841.0px;top:190px;width:5px;height:2px;background:linear-gradient(#57a64a 72%,transparent 72%);opacity:.55"></div><div style="position:absolute;left:1799.0px;top:192px;width:8px;height:2px;background:linear-gradient(#4ec9b0 72%,transparent 72%);opacity:.55"></div><div style="position:absolute;left:1808.0px;top:192px;width:7px;height:2px;background:linear-gradient(#dcdcdc 72%,transparent 72%);opacity:.55"></div><div style="position:absolute;left:1827.0px;top:192px;width:2px;height:2px;background:linear-gradient(#57a64a 72%,transparent 72%);opacity:.55"></div><div style="position:absolute;left:1830.0px;top:192px;width:6px;height:2px;background:linear-gradient(#57a64a 72%,transparent 72%);opacity:.55"></div><div style="position:absolute;left:1837.0px;top:192px;width:2px;height:2px;background:linear-gradient(#57a64a 72%,transparent 72%);opacity:.55"></div><div style="position:absolute;left:1840.0px;top:192px;width:6px;height:2px;background:linear-gradient(#57a64a 72%,transparent 72%);opacity:.55"></div><div style="position:absolute;left:1799.0px;top:194px;width:8px;height:2px;background:linear-gradient(#4ec9b0 72%,transparent 72%);opacity:.55"></div><div style="position:absolute;left:1808.0px;top:194px;width:17px;height:2px;background:linear-gradient(#dcdcdc 72%,transparent 72%);opacity:.55"></div><div style="position:absolute;left:1827.0px;top:194px;width:2px;height:2px;background:linear-gradient(#57a64a 72%,transparent 72%);opacity:.55"></div><div style="position:absolute;left:1830.0px;top:194px;width:9px;height:2px;background:linear-gradient(#57a64a 72%,transparent 72%);opacity:.55"></div><div style="position:absolute;left:1840.0px;top:194px;width:6px;height:2px;background:linear-gradient(#57a64a 72%,transparent 72%);opacity:.55"></div><div style="position:absolute;left:1795.0px;top:196px;width:1px;height:2px;background:linear-gradient(#cccccc 72%,transparent 72%);opacity:.55"></div><div style="position:absolute;left:1797.0px;top:196px;width:15px;height:2px;background:linear-gradient(#4ec9b0 72%,transparent 72%);opacity:.55"></div><div style="position:absolute;left:1812.0px;top:196px;width:1px;height:2px;background:linear-gradient(#dcdcdc 72%,transparent 72%);opacity:.55"></div><div style="position:absolute;left:1795.0px;top:200px;width:7px;height:2px;background:linear-gradient(#569cd6 72%,transparent 72%);opacity:.55"></div><div style="position:absolute;left:1803.0px;top:200px;width:6px;height:2px;background:linear-gradient(#569cd6 72%,transparent 72%);opacity:.55"></div><div style="position:absolute;left:1810.0px;top:200px;width:5px;height:2px;background:linear-gradient(#4ec9b0 72%,transparent 72%);opacity:.55"></div><div style="position:absolute;left:1795.0px;top:202px;width:1px;height:2px;background:linear-gradient(#cccccc 72%,transparent 72%);opacity:.55"></div><div style="position:absolute;left:1799.0px;top:204px;width:15px;height:2px;background:linear-gradient(#4ec9b0 72%,transparent 72%);opacity:.55"></div><div style="position:absolute;left:1815.0px;top:204px;width:12px;height:2px;background:linear-gradient(#dcdcdc 72%,transparent 72%);opacity:.55"></div><div style="position:absolute;left:1799.0px;top:206px;width:15px;height:2px;background:linear-gradient(#4ec9b0 72%,transparent 72%);opacity:.55"></div><div style="position:absolute;left:1815.0px;top:206px;width:12px;height:2px;background:linear-gradient(#dcdcdc 72%,transparent 72%);opacity:.55"></div><div style="position:absolute;left:1799.0px;top:208px;width:7px;height:2px;background:linear-gradient(#4ec9b0 72%,transparent 72%);opacity:.55"></div><div style="position:absolute;left:1807.0px;top:208px;width:12px;height:2px;background:linear-gradient(#dcdcdc 72%,transparent 72%);opacity:.55"></div><div style="position:absolute;left:1795.0px;top:210px;width:1px;height:2px;background:linear-gradient(#cccccc 72%,transparent 72%);opacity:.55"></div><div style="position:absolute;left:1797.0px;top:210px;width:9px;height:2px;background:linear-gradient(#4ec9b0 72%,transparent 72%);opacity:.55"></div><div style="position:absolute;left:1806.0px;top:210px;width:1px;height:2px;background:linear-gradient(#dcdcdc 72%,transparent 72%);opacity:.55"></div><div style="position:absolute;left:1795.0px;top:214px;width:7px;height:2px;background:linear-gradient(#9b9b9b 72%,transparent 72%);opacity:.55"></div><div style="position:absolute;left:1803.0px;top:214px;width:4px;height:2px;background:linear-gradient(#9cdcfe 72%,transparent 72%);opacity:.55"></div><div style="position:absolute;left:1808.0px;top:214px;width:5px;height:2px;background:linear-gradient(#9cdcfe 72%,transparent 72%);opacity:.55"></div><div style="position:absolute;left:1795.0px;top:218px;width:9px;height:2px;background:linear-gradient(#4ec9b0 72%,transparent 72%);opacity:.55"></div><div style="position:absolute;left:1805.0px;top:218px;width:11px;height:2px;background:linear-gradient(#dcdcdc 72%,transparent 72%);opacity:.55"></div><div style="position:absolute;left:1816.0px;top:218px;width:1px;height:2px;background:linear-gradient(#cccccc 72%,transparent 72%);opacity:.55"></div><div style="position:absolute;left:1817.0px;top:218px;width:8px;height:2px;background:linear-gradient(#4ec9b0 72%,transparent 72%);opacity:.55"></div><div style="position:absolute;left:1826.0px;top:218px;width:8px;height:2px;background:linear-gradient(#9a9a9a 72%,transparent 72%);opacity:.55"></div><div style="position:absolute;left:1835.0px;top:218px;width:6px;height:2px;background:linear-gradient(#4ec9b0 72%,transparent 72%);opacity:.55"></div><div style="position:absolute;left:1842.0px;top:218px;width:6px;height:2px;background:linear-gradient(#9a9a9a 72%,transparent 72%);opacity:.55"></div><div style="position:absolute;left:1849.0px;top:218px;width:6px;height:2px;background:linear-gradient(#4ec9b0 72%,transparent 72%);opacity:.55"></div><div style="position:absolute;left:1856.0px;top:218px;width:8px;height:2px;background:linear-gradient(#9a9a9a 72%,transparent 72%);opacity:.55"></div><div style="position:absolute;left:1795.0px;top:222px;width:3px;height:2px;background:linear-gradient(#569cd6 72%,transparent 72%);opacity:.55"></div><div style="position:absolute;left:1799.0px;top:222px;width:8px;height:2px;background:linear-gradient(#dcdcdc 72%,transparent 72%);opacity:.55"></div><div style="position:absolute;left:1807.0px;top:222px;width:1px;height:2px;background:linear-gradient(#cccccc 72%,transparent 72%);opacity:.55"></div><div style="position:absolute;left:1808.0px;top:222px;width:9px;height:2px;background:linear-gradient(#4ec9b0 72%,transparent 72%);opacity:.55"></div><div style="position:absolute;left:1818.0px;top:222px;width:7px;height:2px;background:linear-gradient(#9a9a9a 72%,transparent 72%);opacity:.55"></div><div style="position:absolute;left:1826.0px;top:222px;width:5px;height:2px;background:linear-gradient(#569cd6 72%,transparent 72%);opacity:.55"></div><div style="position:absolute;left:1832.0px;top:222px;width:4px;height:2px;background:linear-gradient(#569cd6 72%,transparent 72%);opacity:.55"></div><div style="position:absolute;left:1837.0px;top:222px;width:12px;height:2px;background:linear-gradient(#9a9a9a 72%,transparent 72%);opacity:.55"></div><div style="position:absolute;left:1795.0px;top:226px;width:4px;height:2px;background:linear-gradient(#569cd6 72%,transparent 72%);opacity:.55"></div><div style="position:absolute;left:1800.0px;top:226px;width:11px;height:2px;background:linear-gradient(#dcdcdc 72%,transparent 72%);opacity:.55"></div><div style="position:absolute;left:1811.0px;top:226px;width:1px;height:2px;background:linear-gradient(#cccccc 72%,transparent 72%);opacity:.55"></div><div style="position:absolute;left:1812.0px;top:226px;width:9px;height:2px;background:linear-gradient(#4ec9b0 72%,transparent 72%);opacity:.55"></div><div style="position:absolute;left:1822.0px;top:226px;width:8px;height:2px;background:linear-gradient(#9a9a9a 72%,transparent 72%);opacity:.55"></div><div style="position:absolute;left:1795.0px;top:230px;width:6px;height:2px;background:linear-gradient(#9b9b9b 72%,transparent 72%);opacity:.55"></div><div style="position:absolute;left:1802.0px;top:230px;width:2px;height:2px;background:linear-gradient(#57a64a 72%,transparent 72%);opacity:.55"></div><div style="position:absolute;left:1805.0px;top:230px;width:5px;height:2px;background:linear-gradient(#7cc36e 72%,transparent 72%);opacity:.55"></div></div>
<div class="abs" style="left:1899px;top:138px;width:1px;height:957px;background:#2f2f2f;"></div>
<div class="abs" style="left:1899px;top:138px;width:21px;height:1px;background:#2f2f2f;"></div>
<div class="abs" style="left:1900px;top:683px;width:20px;height:3px;background:#a0a0a0;"></div>
<div class="abs" style="left:0px;top:1095px;width:51px;height:33px;background:#16825d;"></div>
<svg style="left:0;top:1095px" width="51" height="33" viewBox="0 0 51 33"><path d="M19.7 12.8 25 18.4 19.7 24M31.1 7.7 25.9 13.4 31.2 18.6" stroke="#ffffff" stroke-width="1.7" fill="none" stroke-linecap="round"/></svg>
<svg style="left:50px;top:1095px" width="33" height="33" viewBox="0 0 33 33"><circle cx="23.4" cy="16.6" r="8.6" stroke="#fff" stroke-width="1.6" fill="none"/><path d="M19.9 13.1l7 7M26.9 13.1l-7 7" stroke="#fff" stroke-width="1.6"/></svg>
<div class="t" style="left:88.60px;top:1096px;height:33px;line-height:33px;font-size:18px;color:#ffffff;font-weight:400;font-style:normal;transform:scaleX(0.9500);transform-origin:0 0;-webkit-text-stroke:0.2px #ffffff;">0</div>
<svg style="left:100px;top:1095px" width="33" height="33" viewBox="0 0 33 33"><path d="M13.8 8.8 22 23.4H5.6z" stroke="#fff" stroke-width="1.5" fill="none" stroke-linejoin="round"/><path d="M13.8 13.6v5" stroke="#fff" stroke-width="1.7"/><circle cx="13.8" cy="20.7" r="1" fill="#fff"/></svg>
<div class="t" style="left:129.50px;top:1096px;height:33px;line-height:33px;font-size:18px;color:#ffffff;font-weight:400;font-style:normal;transform:scaleX(0.9500);transform-origin:0 0;-webkit-text-stroke:0.2px #ffffff;">0</div>
<svg style="left:150px;top:1095px" width="33" height="33" viewBox="0 0 33 33"><g transform="translate(23.65 16.3) scale(0.62) translate(-24 -24)"><path d="M21.51 9.61 L26.49 9.61 L27.83 14.76 L32.41 12.07 L35.93 15.59 L33.24 20.17 L38.39 21.51 L38.39 26.49 L33.24 27.83 L35.93 32.41 L32.41 35.93 L27.83 33.24 L26.49 38.39 L21.51 38.39 L20.17 33.24 L15.59 35.93 L12.07 32.41 L14.76 27.83 L9.61 26.49 L9.61 21.51 L14.76 20.17 L12.07 15.59 L15.59 12.07 L20.17 14.76Z" stroke="#fff" stroke-width="2.6" fill="none" stroke-linejoin="round"/><circle cx="24" cy="24" r="3.8" stroke="#fff" stroke-width="2.6" fill="none"/></g></svg>
<div class="t" style="left:188.99px;top:1096px;height:33px;line-height:33px;font-size:18px;color:#ffffff;font-weight:400;font-style:normal;transform:scaleX(1.0053);transform-origin:0 0;-webkit-text-stroke:0.2px #ffffff;">Build</div>
<svg style="left:248px;top:1097px" width="32" height="28" viewBox="0 0 32 28"><path d="M12.1 10.4a3.3 3.3 0 0 1 6.6 0" stroke="#fff" stroke-width="1.5" fill="none"/><path d="M9.9 10.4H21.1C21.4 17 19 22 15.4 22S9.4 17 9.9 10.4z" stroke="#fff" stroke-width="1.5" fill="none" stroke-linejoin="round"/><path d="M7.6 8.1l2.5 2.1M23.3 8.1l-2.5 2.1M6.2 15.7h3.3M21.4 15.7h3.2M8 22.7l2.7-2.7M22.9 22.7l-2.7-2.7" stroke="#fff" stroke-width="1.5"/></svg>
<svg style="left:290px;top:1095px" width="33" height="33" viewBox="0 0 33 33"><path d="M11.9 9.4V24.2L24.4 16.8z" stroke="#fff" stroke-width="1.6" fill="none" stroke-linejoin="round"/></svg>
<div class="t" style="left:1333.14px;top:1096px;height:33px;line-height:33px;font-size:18px;color:#ffffff;font-weight:400;font-style:normal;transform:scaleX(0.9575);transform-origin:0 0;-webkit-text-stroke:0.2px #ffffff;">Ln 47, Col 16</div>
<div class="t" style="left:1458.88px;top:1096px;height:33px;line-height:33px;font-size:18px;color:#ffffff;font-weight:400;font-style:normal;transform:scaleX(0.9203);transform-origin:0 0;-webkit-text-stroke:0.2px #ffffff;">Spaces: 4</div>
<div class="t" style="left:1556.58px;top:1096px;height:33px;line-height:33px;font-size:18px;color:#ffffff;font-weight:400;font-style:normal;transform:scaleX(0.9220);transform-origin:0 0;-webkit-text-stroke:0.2px #ffffff;">UTF-8</div>
<div class="t" style="left:1627.77px;top:1096px;height:33px;line-height:33px;font-size:18px;color:#ffffff;font-weight:400;font-style:normal;transform:scaleX(0.8326);transform-origin:0 0;-webkit-text-stroke:0.2px #ffffff;">CRLF</div>
<div class="t" style="left:1693.40px;top:1094px;height:33px;line-height:33px;font-size:16.5px;color:#ffffff;font-weight:400;font-style:normal;transform:scaleX(1.0250);transform-origin:0 0;-webkit-text-stroke:0.2px #ffffff;">{ }</div>
<div class="t" style="left:1720.64px;top:1096px;height:33px;line-height:33px;font-size:18px;color:#ffffff;font-weight:400;font-style:normal;transform:scaleX(0.9636);transform-origin:0 0;-webkit-text-stroke:0.2px #ffffff;">C</div>
<svg style="left:1750px;top:1098px" width="36" height="26" viewBox="0 0 36 26"><rect x="8.3" y="4.1" width="8.6" height="8.6" rx="3.2" fill="#fff"/><rect x="17.6" y="4.1" width="8.6" height="8.6" rx="3.2" fill="#fff"/><path d="M6.2 17.2C6.2 13.6 8 11.6 10.5 11.6H24C26.5 11.6 28.3 13.6 28.3 17.2 28.3 20.6 23.2 22.8 17.25 22.8S6.2 20.6 6.2 17.2z" fill="#fff"/><rect x="10.8" y="6.5" width="4.9" height="4.8" rx="1.4" fill="#007acc"/><rect x="18.8" y="6.5" width="4.8" height="4.8" rx="1.4" fill="#007acc"/><path d="M10.8 13.4H23.5V19.3C21.8 20.2 19.6 20.5 17.2 20.5S12.6 20.2 10.8 19.3z" fill="#007acc"/><rect x="13.6" y="14.7" width="2.5" height="4.2" rx="1.2" fill="#fff"/><rect x="18.2" y="14.7" width="2.5" height="4.2" rx="1.2" fill="#fff"/></svg>
<div class="t" style="left:1802.00px;top:1096px;height:33px;line-height:33px;font-size:18px;color:#ffffff;font-weight:400;font-style:normal;transform:scaleX(0.9657);transform-origin:0 0;-webkit-text-stroke:0.2px #ffffff;">Win32</div>
<svg style="left:1870px;top:1095px" width="33" height="33" viewBox="0 0 33 33"><path d="M16.8 7.6c-3.2 0-5.6 2.5-5.6 5.8v5.2L9.3 21.3h15L22.4 18.6v-5.2c0-3.3-2.4-5.8-5.6-5.8z" stroke="#fff" stroke-width="1.5" fill="none" stroke-linejoin="round"/><path d="M14.8 23.2a2 2 0 0 0 4 0" stroke="#fff" stroke-width="1.5" fill="none"/></svg>
</body></html>
